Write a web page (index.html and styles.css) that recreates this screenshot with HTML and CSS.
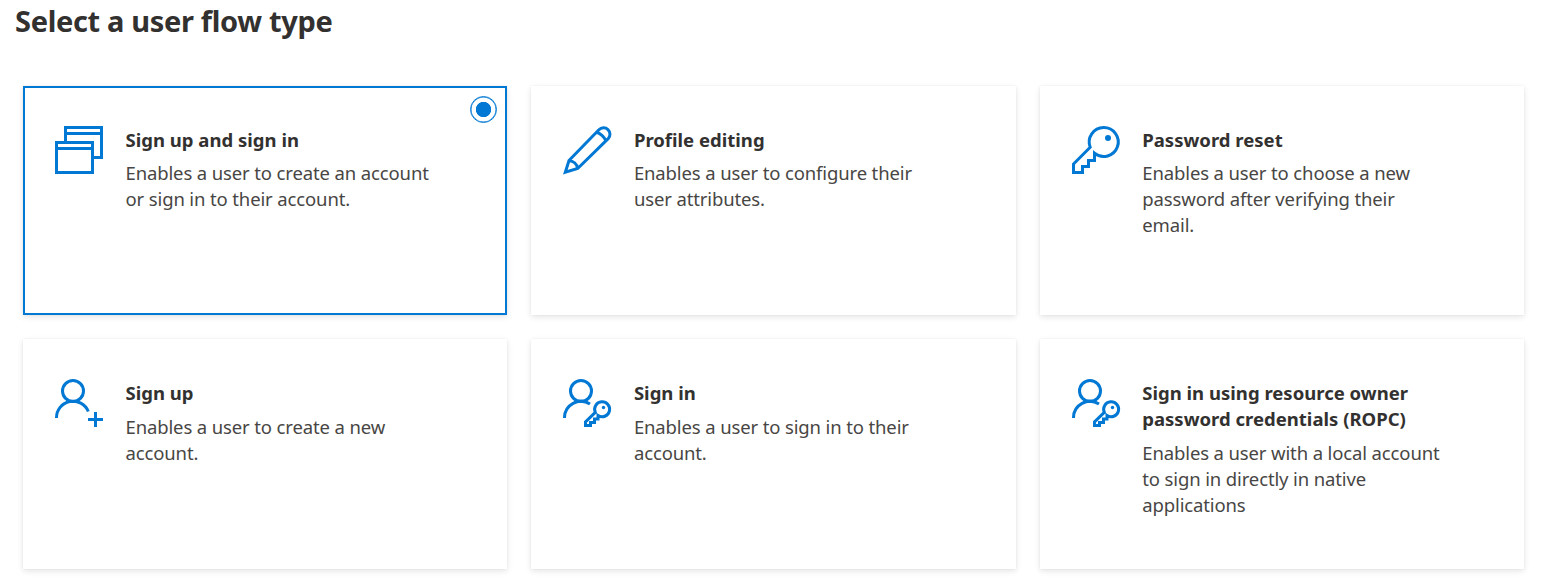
FILE: index.html
```html
<!DOCTYPE html>
<html lang="en">
<head>
<meta charset="utf-8">
<title>Select a user flow type</title>
<link rel="stylesheet" href="styles.css">
</head>
<body>
<svg class="defs" aria-hidden="true">
  <symbol id="person" viewBox="0 0 50 50"><circle cx="18" cy="13" r="10.5"/></symbol>
  <symbol id="user-key" viewBox="0 0 50 50">
    <circle cx="18" cy="13" r="10.5"/>
    <path d="M1.5 40A16.5 16.5 0 0 1 27 26"/>
    <path d="M32.3 34.3 22.5 43.8V47.5H27.5V44.5H31.5V41H35V37.5A7.5 7.5 0 1 0 32.3 34.3Z"/>
    <circle class="dot" cx="40.5" cy="29.5" r="1.7"/>
  </symbol>
</svg>
<h1 class="heading">Select a user flow type</h1>
<main class="grid">
  <section class="card selected">
    <span class="radio"></span>
    <svg class="icon" viewBox="0 0 50 50"><path d="M10.5 16V2.5H46.5V32.5H39M10.5 8.5H46.5M1.5 17.5H37.5V47.5H1.5ZM1.5 23.5H37.5"/></svg>
    <div class="text"><h2>Sign up and sign in</h2><p>Enables a user to create an account<br>or sign in to their account.</p></div>
  </section>
  <section class="card">
    <svg class="icon" viewBox="0 0 50 50"><path d="M6 35.5 35.9 4.8A6.4 6.4 0 0 1 45.2 13.6L14.7 43.5 2.3 47.3ZM6 35.5C10 36 14 39 14.7 43.5M33.5 7.2C37 8 41.5 12 42.8 15.8"/></svg>
    <div class="text"><h2>Profile editing</h2><p>Enables a user to configure their<br>user attributes.</p></div>
  </section>
  <section class="card">
    <svg class="icon" viewBox="0 0 50 50"><path d="M18.2 22.2 1.5 39V47.5H10.5V41.5H16.5V35.5H22.5V28.2A14.5 14.5 0 1 0 18.2 22.2Z"/><circle class="dot" cx="36" cy="13" r="3"/></svg>
    <div class="text"><h2>Password reset</h2><p>Enables a user to choose a new<br>password after verifying their<br>email.</p></div>
  </section>
  <section class="card">
    <svg class="icon" viewBox="0 0 50 50"><use href="#person"/><path d="M1.5 40A16.5 16.5 0 0 1 33.3 33.5M33 41.5H48M40.5 34V49"/></svg>
    <div class="text"><h2>Sign up</h2><p>Enables a user to create a new<br>account.</p></div>
  </section>
  <section class="card">
    <svg class="icon" viewBox="0 0 50 50"><use href="#user-key"/></svg>
    <div class="text"><h2>Sign in</h2><p>Enables a user to sign in to their<br>account.</p></div>
  </section>
  <section class="card">
    <svg class="icon" viewBox="0 0 50 50"><use href="#user-key"/></svg>
    <div class="text"><h2>Sign in using resource owner<br>password credentials (ROPC)</h2><p>Enables a user with a local account<br>to sign in directly in native<br>applications</p></div>
  </section>
</main>
</body>
</html>
```
FILE: styles.css
```css
* { box-sizing: border-box; }
body {
  margin: 0;
  min-height: 586px;
  background: #fff;
  color: #323130;
  font-family: "Noto Sans", "Open Sans", sans-serif;
}
.defs { position: absolute; width: 0; height: 0; }
.heading {
  margin: 0;
  padding: 1px 0 0 15px;
  height: 86px;
  font-size: 29px;
  line-height: 40px;
  font-weight: 700;
  letter-spacing: -.33px;
}
.grid {
  display: grid;
  grid-template-columns: repeat(3, 484.4px);
  grid-template-rows: 229.2px 230px;
  gap: 24px;
  padding-left: 23px;
}
.card {
  position: relative;
  display: flex;
  align-items: flex-start;
  padding: 39px 32px;
  background: #fff;
  box-shadow: 0 2px 6px rgba(0, 0, 0, .11), 0 0 2px rgba(0, 0, 0, .05);
}
.selected { outline: 2px solid #0078d4; outline-offset: -2px; }
.icon {
  flex: none;
  width: 50px;
  height: 50px;
  margin-right: 20.5px;
  fill: none;
  stroke: #0078d4;
  stroke-width: 3;
}
.dot { fill: #0078d4; stroke: none; }
.text { padding-top: 2px; white-space: nowrap; }
h2, p { margin: 0; font-size: 18.5px; line-height: 26px; }
h2 { font-weight: 700; letter-spacing: .01px; }
p { margin-top: 7.4px; color: #484644; letter-spacing: -.13px; }
.radio {
  position: absolute;
  top: 10px;
  right: 10.5px;
  width: 27px;
  height: 27px;
  border: 1px solid #0078d4;
  border-radius: 50%;
  background: radial-gradient(circle, #0078d4 7.3px, #fff 8px);
  box-shadow: inset 0 0 0 .5px #0078d4;
}
```
